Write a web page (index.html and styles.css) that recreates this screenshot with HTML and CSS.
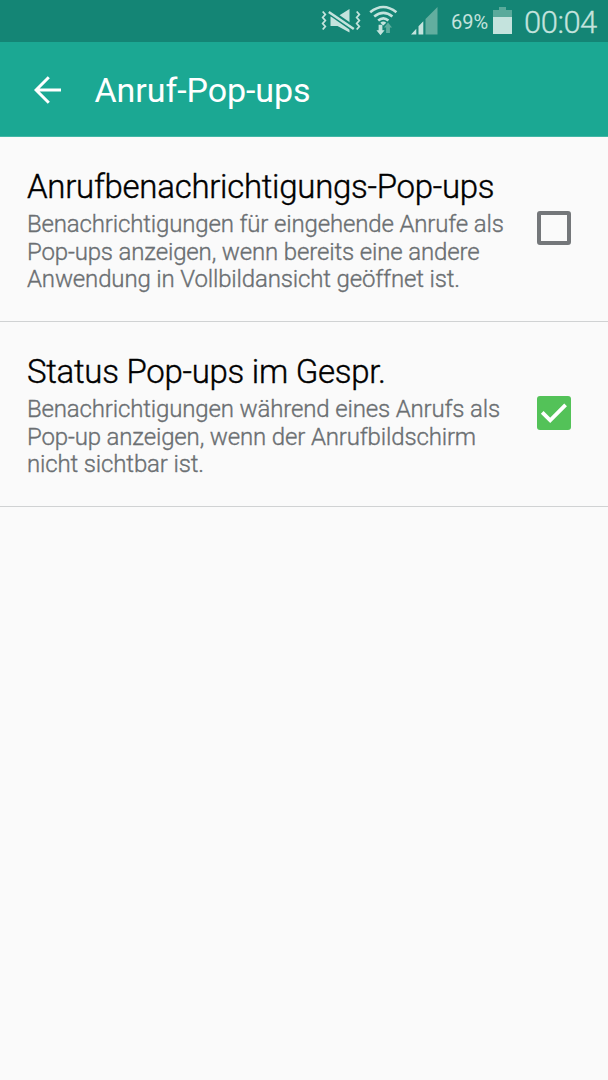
FILE: index.html
```html
<!DOCTYPE html>
<html lang="de">
<head>
<meta charset="utf-8">
<title>Anruf-Pop-ups</title>
<link rel="stylesheet" href="styles.css">
</head>
<body>
<div class="status">
  <svg class="icon-mute" width="40" height="42" viewBox="321 0 40 42">
    <g fill="none" stroke="#c4e3dd" stroke-width="1.8">
      <path d="M322.7 11.5l2.6 3-2.6 3 2.6 3-2.6 3 2.6 3-2.6 3"/>
      <path d="M356.7 11.5l2.6 3-2.6 3 2.6 3-2.6 3 2.6 3-2.6 3"/>
    </g>
    <path fill="#c4e3dd" d="M330.5 16.5h7l12-7.5v23.5l-12-6.5h-7z"/>
    <path stroke="#148575" stroke-width="6" d="M329 11.5l25 17.5"/>
    <path stroke="#c4e3dd" stroke-width="2.6" d="M328.8 12l25 17"/>
  </svg>
  <svg class="icon-wifi" width="30" height="42" viewBox="369 0 30 42">
    <g fill="none" stroke="#c4e3dd" stroke-width="2.6">
      <path d="M370.2 12.2q13-10.4 26.2 0"/>
      <path d="M374.2 16.6q9.2-7.4 18.2 0"/>
      <path d="M378.2 20.6q5.2-4.4 10.2 0"/>
    </g>
    <path fill="#c4e3dd" d="M380.3 22.8q3-2.4 6 0l-3 2.8zM378.6 24.8h3.8v5.5h2.2l-4.1 5-4.1-5h2.2z"/>
    <path fill="#5fae9f" d="M388 22.5l4 5h-2.1v5.5h-3.8v-5.5H384z"/>
  </svg>
  <svg class="icon-signal" width="28" height="42" viewBox="410 0 28 42">
    <path fill="#c4e3dd" d="M411 34.5l5.3-5.7v5.7zM418.5 34.5v-8.3l4.8-5v13.3z"/>
    <path fill="#62ae9f" d="M425.5 34.5V19L437.5 7v27.5z"/>
  </svg>
  <span class="percent">69%</span>
  <svg class="icon-battery" width="19" height="42" viewBox="493 0 19 42">
    <path fill="#5aaa9b" d="M493 10h6V7h7v3h6v7.2h-19z"/>
    <path fill="#c4e3dd" d="M493 17h19v17h-19z"/>
  </svg>
  <span class="clock">00:04</span>
</div>
<header class="appbar">
  <svg class="back" width="28" height="28" viewBox="0 0 28 28">
    <path fill="none" stroke="#fff" stroke-width="3" d="M14.8 1.3L2.1 14l12.7 12.7M2.2 14H27"/>
  </svg>
  <h1 class="heading">Anruf-Pop-ups</h1>
</header>
<main>
  <section class="row">
    <div class="text">
      <h2 class="title">Anrufbenachrichtigungs-Pop-ups</h2>
      <p class="desc">Benachrichtigungen für eingehende Anrufe als<br>Pop-ups anzeigen, wenn bereits eine andere<br>Anwendung in Vollbildansicht geöffnet ist.</p>
    </div>
    <div class="box"></div>
  </section>
  <section class="row">
    <div class="text">
      <h2 class="title">Status Pop-ups im Gespr.</h2>
      <p class="desc">Benachrichtigungen während eines Anrufs als<br>Pop-up anzeigen, wenn der Anrufbildschirm<br>nicht sichtbar ist.</p>
    </div>
    <div class="box checked">
      <svg width="34" height="34" viewBox="0 0 34 34"><path fill="none" stroke="#fff" stroke-width="3.8" d="M5.2 16.4l8 8L28.6 8.8"/></svg>
    </div>
  </section>
</main>
</body>
</html>
```
FILE: styles.css
```css
* { box-sizing: border-box; }
body {
  margin: 0;
  min-height: 1080px;
  background: #fafafa;
  font-family: Roboto, "Liberation Sans", sans-serif;
  color: #000;
}
h1, h2, p { margin: 0; font-weight: 400; white-space: nowrap; }
svg { display: block; flex: none; }
.status {
  display: flex;
  height: 42px;
  padding-left: 321px;
  background: #148575;
  color: #c4e3dd;
  line-height: 44px;
}
.icon-wifi { margin-left: 8px; }
.icon-signal { margin-left: 11px; }
.percent { width: 42px; margin-left: 13px; font-size: 20px; }
.clock {
  margin-left: 12px;
  font-size: 31px;
  font-weight: 300;
  line-height: 45px;
  letter-spacing: -0.5px;
  -webkit-text-stroke: 0.3px #c4e3dd;
}
.appbar {
  display: flex;
  align-items: center;
  height: 95px;
  padding: 1px 0 0 34px;
  background: #1ba893;
  border-bottom: 1px solid #43b7a6;
  color: #fff;
}
.heading {
  margin-left: 32.5px;
  font-size: 34px;
  line-height: 40px;
  letter-spacing: -0.07px;
}
.row {
  display: flex;
  align-items: flex-start;
  justify-content: space-between;
  height: 185px;
  padding: 31px 37px 0 27px;
  border-bottom: 1px solid #d0d2d3;
}
.title {
  font-size: 33px;
  font-weight: 300;
  line-height: 38px;
  letter-spacing: -0.28px;
  -webkit-text-stroke: 0.4px #000;
}
.desc {
  margin-top: 5px;
  font-size: 24px;
  font-weight: 300;
  line-height: 27.6px;
  letter-spacing: -0.15px;
  color: #6b6f72;
  -webkit-text-stroke: 0.35px #6b6f72;
}
.box {
  flex: none;
  width: 34px;
  height: 34px;
  margin-top: 43px;
  border: 4px solid #74777a;
  border-radius: 3px;
}
.checked { border: 0; background: #53c258; }
```
